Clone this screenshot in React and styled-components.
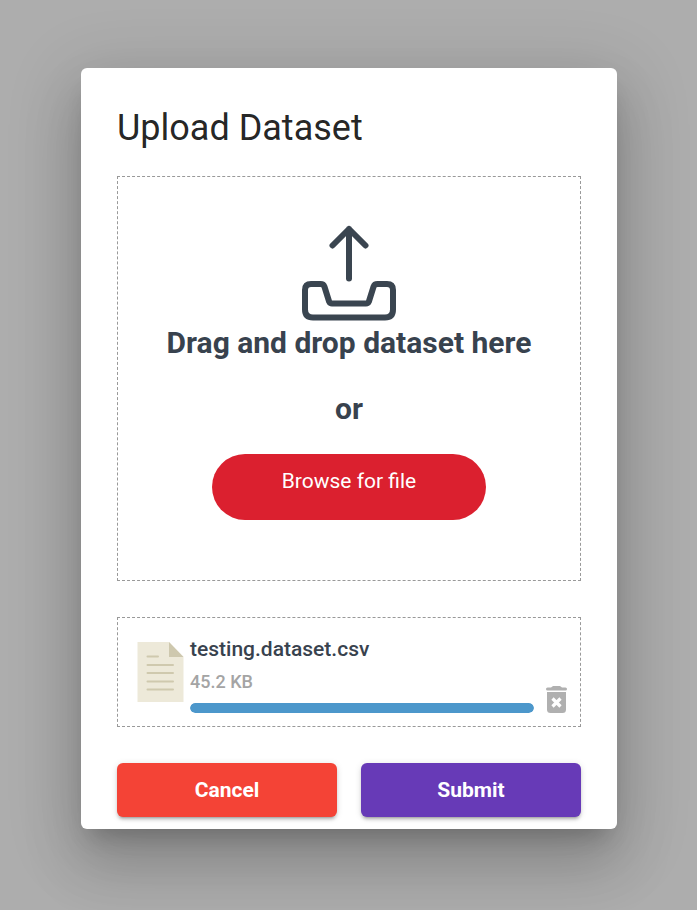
import React, { useRef } from "react";
import styled, { createGlobalStyle } from "styled-components";

const GlobalStyle = createGlobalStyle`
  *, *::before, *::after { box-sizing: border-box; }
  body {
    margin: 0;
    background: #adadad;
    font-family: Roboto, "Liberation Sans", sans-serif;
  }
  h1, h2, p { margin: 0; }
  button { font-family: inherit; border: 0; cursor: pointer; }
`;

const Backdrop = styled.div`
  min-height: 100vh;
  display: flex;
  justify-content: center;
  align-items: flex-start;
  padding: 68px 80px 80px 81px;
  overflow: hidden;
`;

const Dialog = styled.main`
  width: 100%;
  max-width: 840px;
  padding: 36px 36px 12px;
  border-radius: 6px;
  background: #fff;
  box-shadow:
    0 16px 22px -10px rgba(0, 0, 0, 0.2),
    0 36px 57px 4px rgba(0, 0, 0, 0.14),
    0 14px 69px 12px rgba(0, 0, 0, 0.12);
`;

const Title = styled.h1`
  margin-bottom: 24px;
  font-size: 36px;
  font-weight: 400;
  line-height: 48px;
  color: rgba(0, 0, 0, 0.87);
`;

const DashedBox = styled.section`
  border: 1px dashed #999;
  margin-bottom: 36px;
`;

const DropZone = styled(DashedBox)`
  display: flex;
  flex-direction: column;
  align-items: center;
  padding: 47px 24px 60px;
  text-align: center;
`;

const DropText = styled.h2`
  font-size: 30px;
  font-weight: 700;
  line-height: 42px;
  color: #38424e;
  & + & { margin-top: 24px; }
`;

const BrowseButton = styled.button`
  width: 274px;
  max-width: 100%;
  margin-top: 24px;
  padding: 12px 24px 24px;
  border-radius: 33px;
  background: #db202f;
  color: #fff;
  font-size: 21px;
  line-height: 30px;
`;

const FileRow = styled(DashedBox)`
  display: flex;
  align-items: flex-end;
  padding: 16px 12px 12px 18px;
`;

const FileDetails = styled.div`
  flex: 1;
  min-width: 0;
  margin: 0 11px 1px 6px;
`;

const FileName = styled.p`
  font-size: 21px;
  font-weight: 500;
  line-height: 30px;
  color: #38424e;
`;

const FileSize = styled.p`
  margin: 3px 0 6px;
  font-size: 18px;
  font-weight: 500;
  line-height: 30px;
  color: #a4a4a4;
`;

const Track = styled.div`
  height: 10px;
  border-radius: 5px;
  overflow: hidden;
`;

const Fill = styled.div`
  height: 100%;
  border-radius: 5px;
  background: #4c97cb;
`;

const IconButton = styled.button`
  display: flex;
  padding: 0;
  background: none;
`;

const DocSlot = styled.div`
  display: flex;
  align-self: flex-start;
  padding-top: 8px;
`;

const Actions = styled.div`
  display: grid;
  grid-template-columns: 1fr 1fr;
  gap: 24px;
`;

const ActionButton = styled.button`
  height: 54px;
  padding: 0 24px;
  border-radius: 6px;
  background: ${({ $color }) => $color};
  color: #fff;
  font-size: 21px;
  font-weight: 700;
  box-shadow:
    0 4px 2px -3px rgba(0, 0, 0, 0.2),
    0 3px 3px 0 rgba(0, 0, 0, 0.14),
    0 1px 7px 0 rgba(0, 0, 0, 0.12);
`;

function UploadIcon() {
  return (
    <svg width="98" height="98" viewBox="0 0 98 98" fill="none" stroke="#3a4550" strokeWidth="6" strokeLinecap="round" strokeLinejoin="round" aria-hidden="true">
      <path d="M49 54.500V5M32.500 21.500L49 5L65.500 21.500" />
      <path d="M11 60H20.500Q23.500 60 24.400 62.500L29.100 77.500Q30 79.500 32 79.500H66Q68 79.500 68.900 77.500L73.600 62.500Q74.500 60 77.500 60H87Q93 60 93 66V85.500Q93 93.500 85 93.500H13Q5 93.500 5 85.500V66Q5 60 11 60Z" />
    </svg>
  );
}

function DocumentIcon() {
  return (
    <svg width="48" height="62" viewBox="0 0 48 62" aria-hidden="true">
      <path d="M1.500 0H33L47.500 15V60H1.500Z" fill="#ede9d9" />
      <path d="M33 0V15H47.500Z" fill="#cec8ae" />
      <path d="M11.500 14.500H22M11.500 23H37M11.500 31H37M11.500 39.500H37M11.500 47.500H37" stroke="#cfc9ae" strokeWidth="2" strokeLinecap="round" />
    </svg>
  );
}

function TrashIcon() {
  return (
    <svg width="23" height="28" viewBox="0 0 23 28" fill="#b0b0b0" aria-hidden="true">
      <path d="M2.500 1.500H6L8 0H15L17 1.500H20.500Q22 1.500 22 3T20.500 4.500H2.500Q1 4.500 1 3T2.500 1.500Z" />
      <path d="M2 6H21V23.500Q21 27 17.500 27H5.500Q2 27 2 23.500Z" />
      <path d="M7.500 12.500L15.500 20.500M15.500 12.500L7.500 20.500" stroke="#fff" strokeWidth="3.200" />
    </svg>
  );
}

export default function App() {
  const picker = useRef(null);
  const progress = 100;
  return (
    <>
      <GlobalStyle />
      <Backdrop>
        <Dialog role="dialog" aria-labelledby="upload-title">
          <Title id="upload-title">Upload Dataset</Title>
          <DropZone>
            <UploadIcon />
            <DropText>Drag and drop dataset here</DropText>
            <DropText>or</DropText>
            <BrowseButton type="button" onClick={() => picker.current.click()}>
              Browse for file
            </BrowseButton>
            <input ref={picker} type="file" hidden aria-label="Dataset file" />
          </DropZone>
          <FileRow>
            <DocSlot><DocumentIcon /></DocSlot>
            <FileDetails>
              <FileName>testing.dataset.csv</FileName>
              <FileSize>45.2 KB</FileSize>
              <Track role="progressbar" aria-label="Upload progress" aria-valuemin={0} aria-valuemax={100} aria-valuenow={progress}>
                <Fill style={{ width: `${progress}%` }} />
              </Track>
            </FileDetails>
            <IconButton type="button" aria-label="Delete file"><TrashIcon /></IconButton>
          </FileRow>
          <Actions>
            <ActionButton type="button" $color="#f44336">Cancel</ActionButton>
            <ActionButton type="submit" $color="#673ab7">Submit</ActionButton>
          </Actions>
        </Dialog>
      </Backdrop>
    </>
  );
}
